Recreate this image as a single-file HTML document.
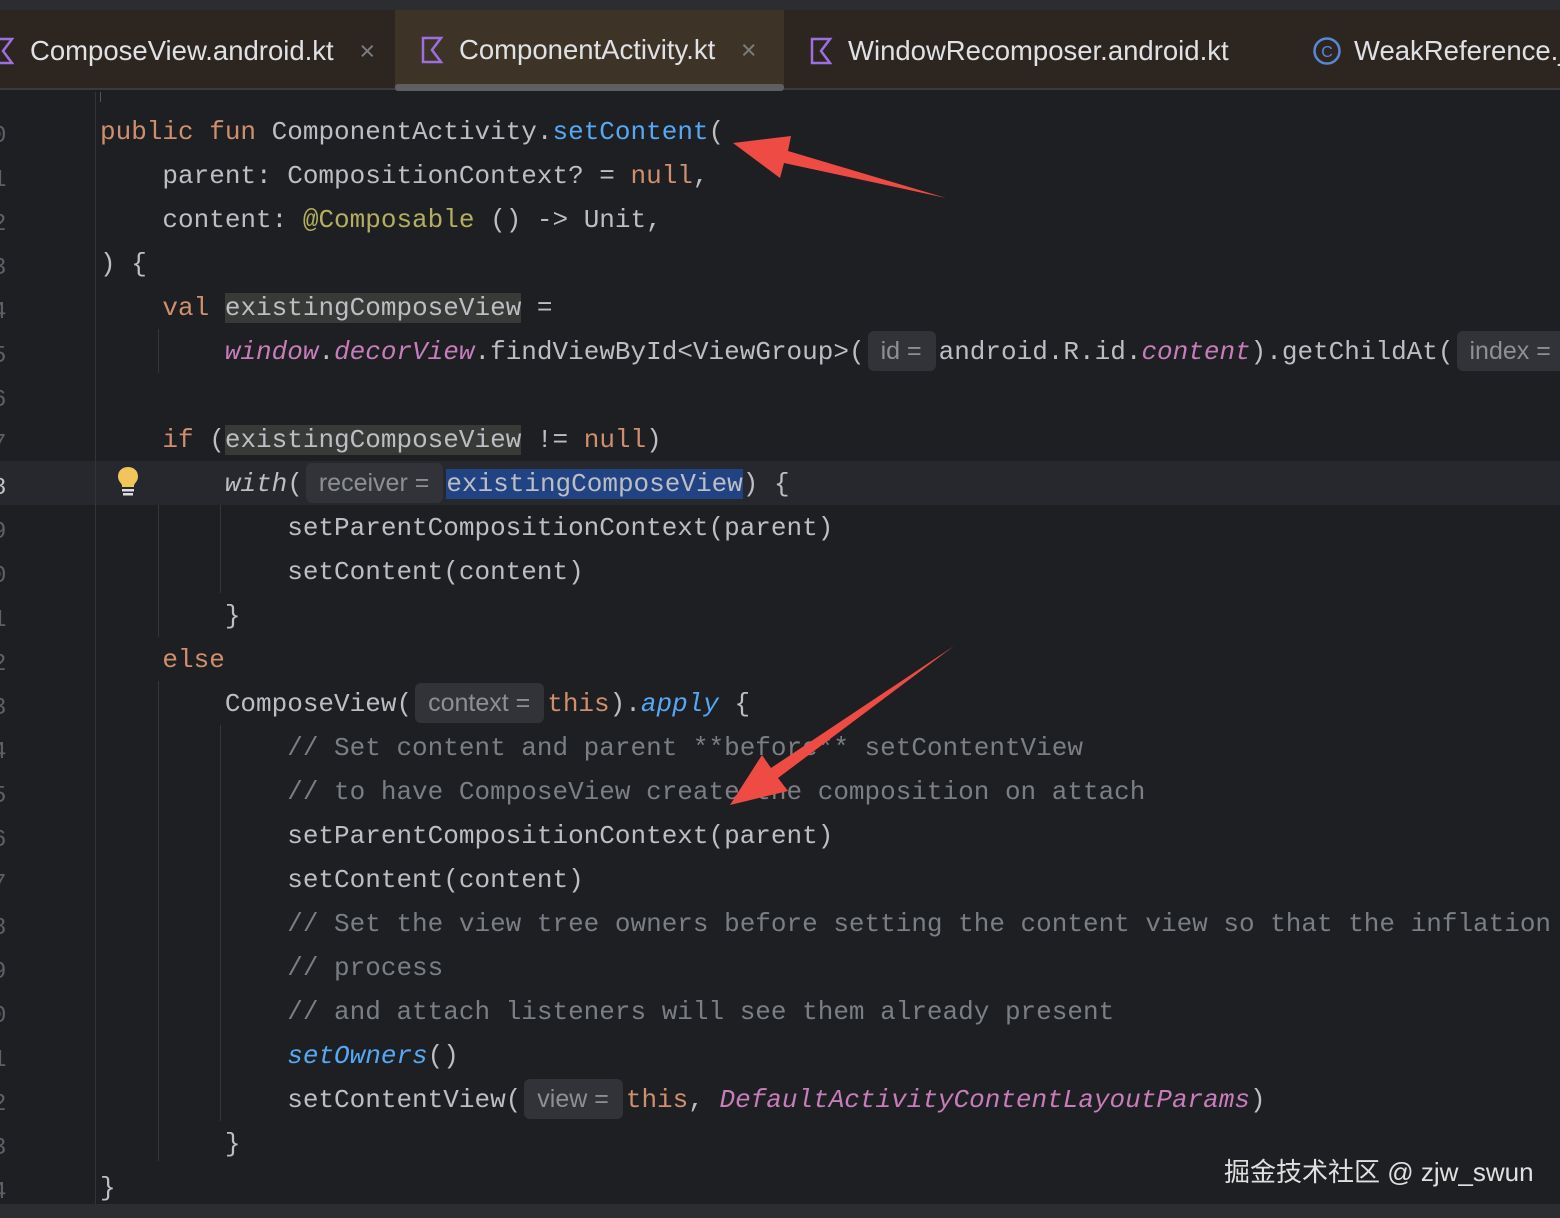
<!DOCTYPE html>
<html><head><meta charset="utf-8"><style>
*{margin:0;padding:0;box-sizing:border-box}
html,body{width:1560px;height:1218px;overflow:hidden;background:#1e1f22}
.top{position:absolute;left:0;top:0;width:1560px;height:10px;background:#2b2d30}
.tabs{position:absolute;left:0;top:10px;width:1560px;height:80px;background:#2d2620;border-bottom:2px solid #3a3b3e}
.tab{position:absolute;top:1px;height:80px;font:27.5px "Liberation Sans",sans-serif;color:#dfe1e5;line-height:80px;white-space:nowrap}
.x{color:#7b7c80;font-size:27px}
.act{background:#3d3427;top:0}
.ul{position:absolute;left:395px;top:84px;width:389px;height:7px;background:#5e5f62;border-radius:3px}
.gut{position:absolute;left:95px;top:92px;width:1px;height:1112px;background:#323438}
.ln{position:absolute;left:-8px;font:24px "Liberation Mono",monospace;color:#5d6066;height:44px;line-height:44px;margin-top:6px}
.l{position:absolute;left:100px;height:44px;line-height:44px;font:26px "Liberation Mono",monospace;color:#bcbec4;white-space:pre;margin-top:8px}
.k{color:#cf8e6d}.f{color:#56a8f5}.c{color:#7a7e85}.p{color:#c77dbb;font-style:italic}.i{font-style:italic}.a{color:#b3ae60}
.h{display:inline-block;background:#313338;color:#8c8f94;font:25px "Liberation Sans",sans-serif;border-radius:6px;padding:0 14px 0 13px;height:40px;line-height:40px;vertical-align:top;margin:-6px 3px 0}
.hl{background:#373a36}
.sel{background:#214283}
.cur{position:absolute;left:0;top:461px;width:1560px;height:44px;background:#26282e}
.g{position:absolute;width:1px;background:#34363a}
.bot{position:absolute;left:0;top:1204px;width:1560px;height:14px;background:#2b2d30}
.wm{position:absolute;left:1224px;top:1152px;font:26px "Liberation Sans","Noto Sans CJK SC",sans-serif;color:#e0e0e0}
</style></head><body>
<div class="top"></div>
<div class="tabs">
 <div class="tab" style="left:-6px"><svg width="20" height="28" style="vertical-align:-5px;margin-right:16px" viewBox="0 0 20 28"><path d="M2 2H18L9 14L18 26H2Z" fill="none" stroke="#9d6fe0" stroke-width="2.5"/></svg>ComposeView.android.kt <span class="x" style="margin-left:18px">×</span></div>
 <div class="tab act" style="left:395px;width:389px;padding-left:26px"><svg width="24" height="28" style="vertical-align:-5px;margin-right:14px" viewBox="0 0 24 28"><path d="M2 2H20L11 14L20 26H2Z" fill="none" stroke="#9d6fe0" stroke-width="2.5"/></svg>ComponentActivity.kt <span class="x" style="margin-left:18px">×</span></div>
 <div class="tab" style="left:810px"><svg width="24" height="28" style="vertical-align:-5px;margin-right:14px" viewBox="0 0 24 28"><path d="M2 2H20L11 14L20 26H2Z" fill="none" stroke="#9d6fe0" stroke-width="2.5"/></svg>WindowRecomposer.android.kt</div>
 <div class="tab" style="left:1312px"><svg width="30" height="30" style="vertical-align:-6px;margin-right:12px" viewBox="0 0 30 30"><circle cx="15" cy="15" r="12.5" fill="none" stroke="#5a86d6" stroke-width="2.5"/><text x="15" y="21" text-anchor="middle" font-family="Liberation Sans" font-size="16" fill="#5a86d6">C</text></svg>WeakReference.java</div>
</div>
<div class="ul"></div>
<div class="cur"></div>
<div class="gut"></div>
<div class="g" style="left:158px;top:329px;height:44px"></div>
<div class="g" style="left:158px;top:505px;height:132px"></div>
<div class="g" style="left:220px;top:505px;height:88px"></div>
<div class="g" style="left:158px;top:681px;height:480px"></div>
<div class="g" style="left:220px;top:725px;height:396px"></div>
<div class="g" style="left:100px;top:92px;height:10px;background:#555"></div>

<div class="ln" style="top:109px">0</div><div class="ln" style="top:153px">1</div><div class="ln" style="top:197px">2</div><div class="ln" style="top:241px">3</div><div class="ln" style="top:285px">4</div><div class="ln" style="top:329px">5</div><div class="ln" style="top:373px">6</div><div class="ln" style="top:417px">7</div><div class="ln" style="top:461px;color:#c0c2c6">8</div><div class="ln" style="top:505px">9</div><div class="ln" style="top:549px">0</div><div class="ln" style="top:593px">1</div><div class="ln" style="top:637px">2</div><div class="ln" style="top:681px">3</div><div class="ln" style="top:725px">4</div><div class="ln" style="top:769px">5</div><div class="ln" style="top:813px">6</div><div class="ln" style="top:857px">7</div><div class="ln" style="top:901px">8</div><div class="ln" style="top:945px">9</div><div class="ln" style="top:989px">0</div><div class="ln" style="top:1033px">1</div><div class="ln" style="top:1077px">2</div><div class="ln" style="top:1121px">3</div><div class="ln" style="top:1165px">4</div>

<svg style="position:absolute;left:116px;top:466px" width="24" height="34" viewBox="0 0 24 34"><path d="M12 1C5.5 1 2 5.5 2 10.5c0 4 2.5 6 4 8.5V21h12v-2c1.5-2.5 4-4.5 4-8.5C22 5.5 18.5 1 12 1Z" fill="#f2c55c"/><rect x="6" y="23" width="12" height="2.5" fill="#ddd"/><rect x="7" y="27" width="10" height="2.5" fill="#ddd"/></svg>

<div class="l" style="top:109px"><span class="k">public fun </span>ComponentActivity.<span class="f">setContent</span>(</div>
<div class="l" style="top:153px">    parent: CompositionContext? = <span class="k">null</span>,</div>
<div class="l" style="top:197px">    content: <span class="a">@Composable</span> () -&gt; Unit,</div>
<div class="l" style="top:241px">) {</div>
<div class="l" style="top:285px">    <span class="k">val </span><span class="hl">existingComposeView</span> =</div>
<div class="l" style="top:329px">        <span class="p">window</span>.<span class="p">decorView</span>.findViewById&lt;ViewGroup&gt;(<span class="h">id =</span>android.R.id.<span class="p">content</span>).getChildAt(<span class="h">index =</span></div>
<div class="l" style="top:417px">    <span class="k">if </span>(<span class="hl">existingComposeView</span> != <span class="k">null</span>)</div>
<div class="l" style="top:461px">        <span class="i">with</span>(<span class="h">receiver =</span><span class="sel">existingComposeView</span>) {</div>
<div class="l" style="top:505px">            setParentCompositionContext(parent)</div>
<div class="l" style="top:549px">            setContent(content)</div>
<div class="l" style="top:593px">        }</div>
<div class="l" style="top:637px">    <span class="k">else</span></div>
<div class="l" style="top:681px">        ComposeView(<span class="h">context =</span><span class="k">this</span>).<span class="f i">apply</span> {</div>
<div class="l c" style="top:725px">            // Set content and parent **before** setContentView</div>
<div class="l c" style="top:769px">            // to have ComposeView create the composition on attach</div>
<div class="l" style="top:813px">            setParentCompositionContext(parent)</div>
<div class="l" style="top:857px">            setContent(content)</div>
<div class="l c" style="top:901px">            // Set the view tree owners before setting the content view so that the inflation</div>
<div class="l c" style="top:945px">            // process</div>
<div class="l c" style="top:989px">            // and attach listeners will see them already present</div>
<div class="l" style="top:1033px">            <span class="f i">setOwners</span>()</div>
<div class="l" style="top:1077px">            setContentView(<span class="h">view =</span><span class="k">this</span>, <span class="p">DefaultActivityContentLayoutParams</span>)</div>
<div class="l" style="top:1121px">        }</div>
<div class="l" style="top:1165px">}</div>

<svg style="position:absolute;left:0;top:0" width="1560" height="1218">
<polygon points="733,143 791,136 788,151 946,198 784,163 780,178" fill="#ef4b45"/>
<polygon points="730,805 762,755 771,768 954,646 778,778 788,791" fill="#ef4b45"/>
</svg>
<div class="bot"></div>
<div class="wm">掘金技术社区 @ zjw_swun</div>
</body></html>
